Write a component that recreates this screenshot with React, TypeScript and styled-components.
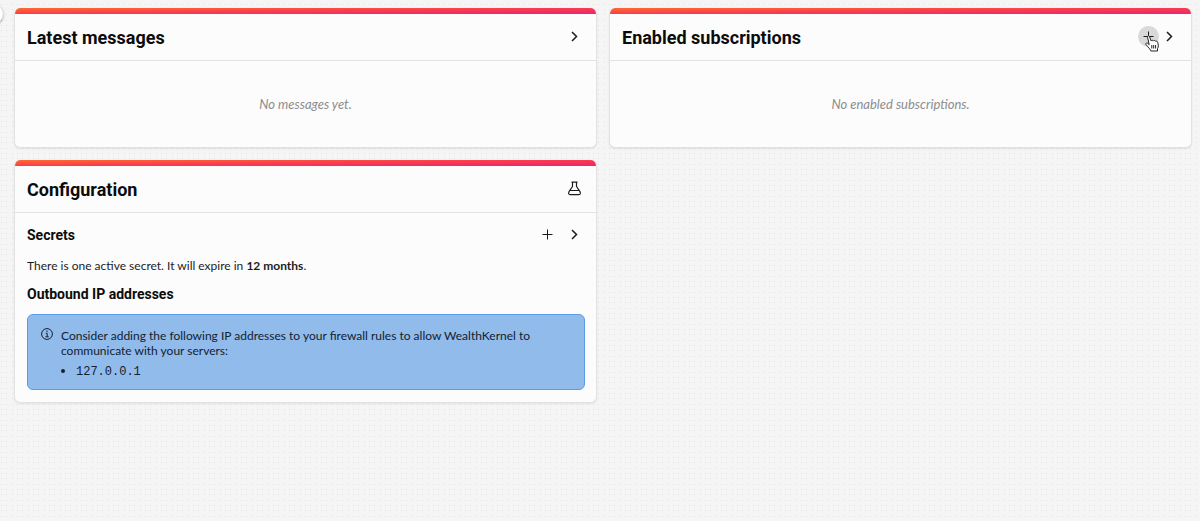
import React from "react";
import styled, { createGlobalStyle } from "styled-components";

const dotColumns = [1, 6, 12];
const dotRows = [4, 9, 14];

const tile = encodeURIComponent(
  `<svg xmlns="http://www.w3.org/2000/svg" width="16" height="16" fill="#e2e2e2">${dotRows
    .flatMap((y) => dotColumns.map((x) => `<rect x="${x}" y="${y}" width="1" height="1"/>`))
    .join("")}</svg>`
);

const GlobalStyle = createGlobalStyle`
  *, *::before, *::after { box-sizing: border-box; }
  body {
    margin: 0;
    color: #1c1c1e;
    background: #f5f5f5 url("data:image/svg+xml,${tile}");
    font-family: Lato, sans-serif;
    font-size: 12px;
    line-height: 15px;
  }
`;

const Page = styled.main`
  position: relative;
  display: grid;
  grid-template-columns: repeat(2, minmax(0, 1fr));
  align-items: start;
  gap: 12px;
  padding: 8px 8px 8px 14px;
`;

const SidebarToggle = styled.button`
  position: absolute;
  top: 4px;
  left: -17px;
  width: 20px;
  height: 20px;
  padding: 0;
  border: 0;
  border-radius: 50%;
  background: #fff;
  box-shadow: 0 1px 3px rgba(0, 0, 0, 0.4);
`;

const CardBox = styled.section`
  overflow: hidden;
  border: 1px solid #e2e2e2;
  border-top: 0;
  border-radius: 6px;
  background: #fcfcfc;
  box-shadow: 0 1px 2px rgba(0, 0, 0, 0.08);
`;

const Stripe = styled.div`
  height: 6px;
  margin: 0 -1px;
  background: linear-gradient(to bottom right, #ff6a30, #f93c50, #ec2470);
`;

const CardHeader = styled.header`
  display: flex;
  align-items: center;
  justify-content: space-between;
  height: 47px;
  padding: 0 11px 0 12px;
  border-bottom: 1px solid #e2e2e2;
`;

const CardTitle = styled.h2`
  margin: 0;
  padding-top: 2px;
  color: #0c0c0c;
  font: 700 18px/24px Roboto, sans-serif;
`;

const SectionTitle = styled.h3`
  margin: 0;
  color: #0c0c0c;
  font: 700 14px/20px Roboto, sans-serif;
`;

const Actions = styled.div<{ $gap?: number }>`
  display: flex;
  gap: ${(p) => p.$gap ?? 0}px;
`;

const HeaderActions = styled(Actions)`
  padding-bottom: 2px;
`;

const IconButton = styled.button<{ $active?: boolean }>`
  position: relative;
  display: grid;
  place-items: center;
  width: 21px;
  height: 21px;
  padding: 0;
  border: 0;
  border-radius: 50%;
  color: #1c1c1e;
  background: ${(p) => (p.$active ? "#d9d9d9" : "transparent")};
  cursor: pointer;
`;

const Pointer = styled.svg`
  position: absolute;
  top: 9px;
  left: 6px;
`;

const Empty = styled.p`
  margin: 0;
  padding: 36px 12px 35px;
  color: #8c8c8c;
  font-size: 13px;
  font-style: italic;
  text-align: center;
`;

const CardBody = styled.div`
  display: flex;
  flex-direction: column;
  padding: 11px 11px 12px 12px;
`;

const SectionRow = styled.div`
  display: flex;
  align-items: center;
  justify-content: space-between;
`;

const Paragraph = styled.p`
  margin: 13px 0 11px;
`;

const Notice = styled.div`
  display: flex;
  gap: 8px;
  margin-top: 10px;
  padding: 13px 13px 10px;
  border: 1px solid #5c9ce4;
  border-radius: 6px;
  color: #14222f;
  background: #90bbeb;
`;

const NoticeIcon = styled.svg`
  flex: none;
`;

const NoticeText = styled.p`
  margin: 0;
`;

const AddressList = styled.ul`
  margin: 6px 0 0;
  padding-left: 15px;
  line-height: 14px;
`;

const Address = styled.code`
  font: 12px/14px "Liberation Mono", monospace;
`;

const PlusIcon = () => (
  <svg width="11" height="11" viewBox="0 0 11 11" stroke="currentColor" fill="none" aria-hidden>
    <path d="M5.5 .5v10M.5 5.5h10" />
  </svg>
);

const ChevronIcon = () => (
  <svg width="11" height="11" viewBox="0 0 11 11" stroke="currentColor" strokeWidth="1.5" fill="none" aria-hidden>
    <path d="M3 1l4.500 4.500L3 10" />
  </svg>
);

const FlaskIcon = () => (
  <svg width="15" height="15" viewBox="0 0 15 15" stroke="currentColor" strokeWidth="1.2" strokeLinejoin="round" fill="none" aria-hidden>
    <path d="M4.500 1.200h6M5.500 1.200v4.300L2 10.700Q.8 13.600 3.200 13.600h8.600Q14.200 13.600 13 10.700L9.500 5.500V1.200M3.200 9.500h8.600" />
  </svg>
);

const HandPointer = () => (
  <Pointer width="17" height="18" viewBox="0 0 17 18" aria-hidden>
    <path
      d="M3.500 2.200C3.100.8 4.900.3 5.500 1.700L7.200 6C7.500 5.100 8.900 5 9.400 6 9.900 5.200 11.300 5.300 11.700 6.400 12.400 5.900 13.400 6.300 13.700 7.300L14.300 10.300Q14.500 12.200 13.500 13.700V16H6.900L6.300 14.500Q4.800 13.500 3.800 11.700L1.900 9.500C1.200 8.400 2.600 7.500 3.700 8.400L5.200 9.600Z"
      fill="#fff"
      stroke="#222"
      strokeLinejoin="round"
    />
    <path d="M7.800 10v3.500M9.700 10v3.500M11.600 10v3.500" stroke="#222" />
  </Pointer>
);

const InfoIcon = () => (
  <NoticeIcon width="12" height="12" viewBox="0 0 12 12" fill="none" stroke="currentColor" aria-hidden>
    <circle cx="6" cy="6" r="5.400" />
    <path d="M4.800 5.300H6.200V8.800M4.500 8.800h3.200" />
    <circle cx="6" cy="3.200" r=".7" fill="currentColor" stroke="none" />
  </NoticeIcon>
);

type CardProps = { title: string; actions: React.ReactNode; children: React.ReactNode };

const Card = ({ title, actions, children }: CardProps) => (
  <CardBox aria-label={title}>
    <Stripe />
    <CardHeader>
      <CardTitle>{title}</CardTitle>
      <HeaderActions>{actions}</HeaderActions>
    </CardHeader>
    {children}
  </CardBox>
);

export default function App() {
  return (
    <>
      <GlobalStyle />
      <Page>
        <SidebarToggle aria-label="Toggle sidebar" />
        <Card
          title="Latest messages"
          actions={<IconButton aria-label="View messages"><ChevronIcon /></IconButton>}
        >
          <Empty>No messages yet.</Empty>
        </Card>
        <Card
          title="Enabled subscriptions"
          actions={
            <>
              <IconButton $active aria-label="Add subscription">
                <PlusIcon />
                <HandPointer />
              </IconButton>
              <IconButton aria-label="View subscriptions"><ChevronIcon /></IconButton>
            </>
          }
        >
          <Empty>No enabled subscriptions.</Empty>
        </Card>
        <Card
          title="Configuration"
          actions={<IconButton aria-label="Test configuration"><FlaskIcon /></IconButton>}
        >
          <CardBody>
            <SectionRow>
              <SectionTitle>Secrets</SectionTitle>
              <Actions $gap={6}>
                <IconButton aria-label="Add secret"><PlusIcon /></IconButton>
                <IconButton aria-label="View secrets"><ChevronIcon /></IconButton>
              </Actions>
            </SectionRow>
            <Paragraph>
              There is one active secret. It will expire in <strong>12 months</strong>.
            </Paragraph>
            <SectionTitle>Outbound IP addresses</SectionTitle>
            <Notice>
              <InfoIcon />
              <div>
                <NoticeText>
                  Consider adding the following IP addresses to your firewall rules to allow WealthKernel to
                  communicate with your servers:
                </NoticeText>
                <AddressList>
                  <li><Address>127.0.0.1</Address></li>
                </AddressList>
              </div>
            </Notice>
          </CardBody>
        </Card>
      </Page>
    </>
  );
}
